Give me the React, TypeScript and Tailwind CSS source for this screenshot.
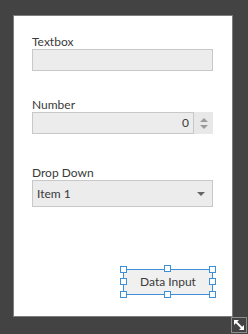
import React from "react";

const Handle = ({ className }: { className: string }) => (
  <span
    className={
      "absolute w-[7px] h-[7px] bg-white border border-[#3d8fd6] " + className
    }
  />
);

const Label = ({ text }: { text: string }) => (
  <div className="h-4 leading-[18px] text-[12px] text-[#3a3a3a]">{text}</div>
);

const App = () => {
  return (
    <div
      className="relative w-[248px] h-[334px] bg-[#434343] pt-[15px] pl-[13px]"
      style={{ fontFamily: 'Lato, "Open Sans", sans-serif' }}
    >
      <div className="w-[220px] h-[302px] bg-white border border-[#7c7c7c] pl-[18px] pr-[19px] pt-[17px] flex flex-col">
        {/* textbox */}
        <Label text="Textbox" />
        <div className="h-[22px] bg-[#ececec] border border-[#c8c8c8]" />

        {/* number */}
        <div className="mt-[25px]">
          <Label text="Number" />
        </div>
        <div className="flex h-[22px]">
          <div className="flex-1 bg-[#ececec] border border-[#c8c8c8] flex items-center justify-end pr-[4px] text-[12px] text-[#3a3a3a]">
            0
          </div>
          <div className="w-[19px] bg-[#e8e8e8] flex flex-col items-center justify-center gap-[3px]">
            <svg width="8" height="4" viewBox="0 0 8 4">
              <path d="M0 4 L4 0 L8 4 Z" fill="#9a9a9a" />
            </svg>
            <svg width="8" height="4" viewBox="0 0 8 4">
              <path d="M0 0 L8 0 L4 4 Z" fill="#9a9a9a" />
            </svg>
          </div>
        </div>

        {/* drop down */}
        <div className="mt-[30px]">
          <Label text="Drop Down" />
        </div>
        <div className="h-[27px] bg-[#ececec] border border-[#c8c8c8] flex items-center justify-between pl-[4px] pr-[7px] text-[12px] text-[#3a3a3a]">
          <span>Item 1</span>
          <svg width="8" height="4" viewBox="0 0 8 4">
            <path d="M0 0 L8 0 L4 4 Z" fill="#666666" />
          </svg>
        </div>

        {/* selected button */}
        <div className="mt-[62px] flex justify-end">
          <div className="relative w-[90px] h-[26px] bg-[#f0f0f0] border border-[#3d8fd6] flex items-center justify-center text-[12px] text-[#3a3a3a]">
            Data Input
            <Handle className="-left-[4px] -top-[4px]" />
            <Handle className="left-[40px] -top-[5px]" />
            <Handle className="-right-[4px] -top-[4px]" />
            <Handle className="-left-[4px] top-[8px]" />
            <Handle className="-right-[4px] top-[8px]" />
            <Handle className="-left-[4px] -bottom-[4px]" />
            <Handle className="left-[40px] -bottom-[4px]" />
            <Handle className="-right-[4px] -bottom-[4px]" />
          </div>
        </div>
      </div>

      {/* resize icon */}
      <div className="absolute left-[231px] top-[317px] w-[16px] h-[16px] border border-[#8c8c8c] flex items-center justify-center">
        <svg width="12" height="12" viewBox="0 0 12 12">
          <path d="M2.5 2.5 L9.5 9.5" stroke="white" strokeWidth="1.8" />
          <path d="M1 1 H6 L1 6 Z" fill="white" />
          <path d="M11 11 H6 L11 6 Z" fill="white" />
        </svg>
      </div>
    </div>
  );
};

export default App;
